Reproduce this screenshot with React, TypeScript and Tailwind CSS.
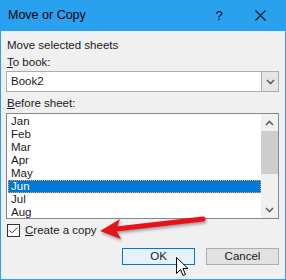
import { Check } from 'lucide-react';

const SHEETS = ['Jan', 'Feb', 'Mar', 'Apr', 'May', 'Jun', 'Jul', 'Aug'];

function Chevron({ up }: { up?: boolean }) {
  return (
    <svg width="9" height="6" viewBox="0 0 9 6" className="block">
      <path d={up ? 'M1 5 L4.5 1.5 L8 5' : 'M1 1 L4.5 4.5 L8 1'} fill="none" stroke="#606060" strokeWidth="1.6" />
    </svg>
  );
}

export default function App() {
  return (
    <div
      className="relative w-[286px] h-[280px] bg-[#f0f0f0] border border-t-0 border-[#2aa1ef] flex flex-col overflow-hidden text-[#1a1a1a]"
      style={{ fontFamily: '"Liberation Sans", Arial, sans-serif' }}
    >
      {/* Title bar */}
      <div className="h-[31px] bg-[#2aa1ef] flex items-center pl-[8px] -mx-px text-[12.5px] text-black">
        <span className="flex-1">Move or Copy</span>
        <span className="w-[14px] text-center mr-[29px] text-[13px]">?</span>
        <svg width="11" height="11" viewBox="0 0 11 11" className="mr-[20px]">
          <path d="M0.5 0.5 L10.5 10.5 M10.5 0.5 L0.5 10.5" stroke="#111" strokeWidth="1.1" />
        </svg>
      </div>

      {/* Body */}
      <div className="flex flex-col px-[5px] text-[11.5px] leading-[13px]">
        <p className="mt-[8px] pl-[1px]">Move selected sheets</p>
        <p className="mt-[4px] pl-[1px]"><span className="underline">T</span>o book:</p>

        <div className="mt-[2px] h-[21px] w-[273px] bg-white border border-[#adadad] flex items-center">
          <span className="flex-1 pl-[4px]">Book2</span>
          <div className="w-[17px] h-full bg-[#e5e5e5] border-l border-[#adadad] flex items-center justify-center">
            <Chevron />
          </div>
        </div>

        <p className="mt-[5px] pl-[1px]"><span className="underline">B</span>efore sheet:</p>

        <div className="mt-[3px] h-[106px] w-[273px] bg-white border border-[#828790] flex">
          <div className="flex-1 flex flex-col pt-[1px] pl-[1px]">
            {SHEETS.map((s) => (
              <div
                key={s}
                className={
                  s === 'Jun'
                    ? 'h-[13px] pl-[3px] bg-[#0078d7] text-white outline outline-1 outline-dotted outline-[#f7a24a] -outline-offset-1'
                    : 'h-[13px] pl-[3px]'
                }
              >
                {s}
              </div>
            ))}
          </div>
          <div className="w-[17px] bg-[#f0f0f0] flex flex-col items-center">
            <div className="h-[17px] flex items-center justify-center"><Chevron up /></div>
            <div className="w-full h-[43px] bg-[#cdcdcd]" />
            <div className="flex-1" />
            <div className="h-[17px] flex items-center justify-center"><Chevron /></div>
          </div>
        </div>

        <div className="mt-[5px] flex items-center">
          <div className="w-[13px] h-[13px] ml-[1px] border border-[#333] bg-white flex items-center justify-center">
            <Check size={11} strokeWidth={2} color="#333" />
          </div>
          <span className="ml-[5px]"><span className="underline">C</span>reate a copy</span>
        </div>

        <div className="mt-[11px] flex justify-end gap-[11px] pr-[1px]">
          <button className="w-[73px] h-[17px] bg-[#e5f1fb] border border-[#0078d7] leading-none">OK</button>
          <button className="w-[73px] h-[17px] bg-[#e1e1e1] border border-[#adadad] leading-none">Cancel</button>
        </div>
      </div>

      {/* Red callout arrow */}
      <svg
        className="absolute left-[95px] top-[210px]"
        width="115"
        height="34"
        viewBox="0 0 115 34"
        style={{ filter: 'drop-shadow(1px 2px 1.5px rgba(0,0,0,0.35))' }}
      >
        <path d="M20 19 L107 9" stroke="#e8121b" strokeWidth="5" strokeLinecap="round" />
        <path d="M4 21 L24 9 L20 20 L25 29 Z" fill="#e8121b" />
      </svg>

      {/* Mouse cursor */}
      <svg className="absolute left-[175px] top-[257px]" width="13" height="21" viewBox="0 0 13 21">
        <path d="M0.5 0.5 L0.5 16.5 L4.5 12.5 L7 18.5 L9.5 17.5 L7 11.5 L12 11.5 Z" fill="#fff" stroke="#000" strokeWidth="1" />
      </svg>
    </div>
  );
}
